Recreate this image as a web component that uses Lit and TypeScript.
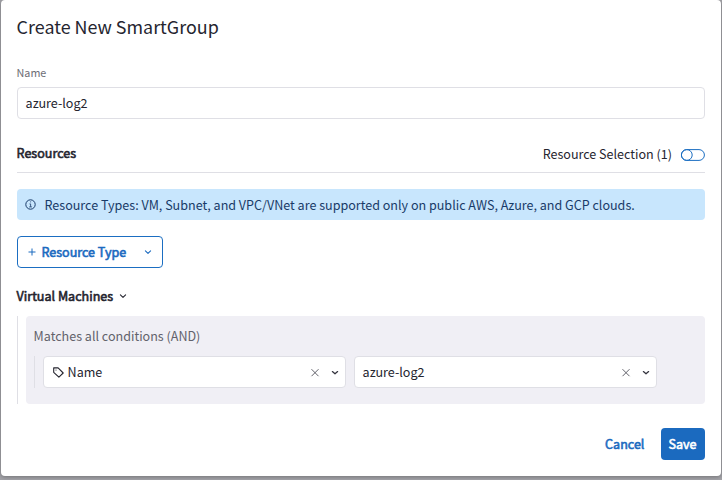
import { LitElement, html, css, svg } from "lit";
import { customElement, property } from "lit/decorators.js";

const chevron = (w: number) => html`<svg width=${w} height=${w} viewBox="0 0 8 8" fill="none" stroke="currentColor"
  stroke-width="1.1" stroke-linecap="round" stroke-linejoin="round">${svg`<path d="M1.4 2.9 4 5.4 6.6 2.9"/>`}</svg>`;

@customElement("select-field")
class SelectField extends LitElement {
  @property() value = "";
  static styles = css`
    :host { display: flex; align-items: center; box-sizing: border-box; width: 303px; height: 32px;
      padding: 0 6px 0 8px; background: #fff; border: 1px solid #dfdfe5; border-radius: 4px; color: #25252f; }
    .value { flex: 1; margin-left: -.4px; }
    svg { display: block; }
    .clear { margin-right: 11px; color: #62626b; }
    .arrow { color: #33333d; }
  `;
  render() {
    return html`<slot></slot><span class="value">${this.value}</span>
      <svg class="clear" width="10" height="10" viewBox="0 0 10 10" fill="none" stroke="currentColor"><path d="M1.5 2.2 8.5 9.2M8.5 2.2 1.5 9.2"/></svg>
      <svg class="arrow" width="8" height="8" viewBox="0 0 8 8" fill="none" stroke="currentColor" stroke-width="1.3" stroke-linecap="round" stroke-linejoin="round"><path d="M1.4 3.6 4 5.8 6.6 3.6"/></svg>`;
  }
}

@customElement("app-root")
class AppRoot extends LitElement {
  static styles = css`
    :host { display: block; box-sizing: border-box; width: 722px; height: 480px; padding: 0 1px 4px; overflow: hidden;
      background: #a3a3a8; font: 12.55px/20px "Noto Sans CJK SC", "Noto Sans", sans-serif; color: #25252f; }
    svg { display: block; flex: none; }
    .dialog { box-sizing: border-box; height: 476px; padding: 11px 16px 0 15.6px; background: #fff; border-radius: 4px;
      box-shadow: 0 1px 4px #0000004d; display: flex; flex-direction: column; }
    .title { font-size: 17.9px; line-height: 30px; }
    .label { margin-top: 22px; font-size: 10.75px; color: #6d6d76; }
    .input { margin: 4px 0 0 .4px; height: 30px; line-height: 30px; border: 1px solid #dfdfe5; border-radius: 4px; padding-left: 7.6px; }
    .resources { margin: 24px 0 0 .4px; height: 29px; border-bottom: 1px solid #dfdfe5; display: flex; justify-content: space-between; }
    .bold { -webkit-text-stroke: .6px currentColor; }
    .resources .bold { margin-left: -.4px; }
    .selection { display: flex; align-items: flex-start; height: 23px; gap: 8px; }
    .selection span { line-height: 22px; }
    .selection svg { margin-top: 6px; }
    .info { margin: 16px 0 0 .4px; height: 31px; border-radius: 4px; background: #c8e6fd; color: #193b68; display: flex;
      align-items: center; padding-left: 8.5px; gap: 8px; }
    .add { margin: 16px 0 0 .4px; box-sizing: border-box; width: 146px; height: 32px; border: 1px solid #1b6ec2; border-radius: 4px;
      display: flex; align-items: center; padding: 0 10px; color: #1b6abf; }
    .add .text { margin-left: 5.4px; flex: 1; }
    .machines { margin-top: 18px; height: 20px; display: flex; align-items: center; gap: 6px; }
    .group { margin: 10px 0 0 .4px; height: 88px; border-left: 1px solid #dfdfe5; padding-left: 8px; }
    .panel { box-sizing: border-box; height: 88px; background: #f0eff5; border-radius: 4px; padding: 10px 8px; }
    .match { color: #62626b; margin-left: -.4px; }
    .row { margin-top: 10px; border-left: 1px solid #dfdfe5; padding-left: 8px; display: flex; gap: 8px; }
    .tag { margin: 0 4px 0 1px; }
    .footer { margin-top: 24px; height: 32px; display: flex; justify-content: flex-end; align-items: center; gap: 16.6px;
      color: #1b6abf; }
    .save { box-sizing: border-box; width: 44px; height: 32px; line-height: 32px; padding-right: 1px; text-align: center; background: #1b6abf; color: #fff; border-radius: 4px; }
  `;
  render() {
    return html`<div class="dialog">
      <div class="title"><span>Create New SmartGroup</span></div>
      <div class="label"><span>Name</span></div>
      <div class="input"><span>azure-log2</span></div>
      <div class="resources">
        <span class="bold">Resources</span>
        <div class="selection"><span>Resource Selection (1)</span>
          <svg width="25" height="12" viewBox="0 0 25 12" fill="none" stroke="#1b6ec2"><rect x="1.4" y=".6" width="23" height="10.8" rx="5.4"/><circle cx="6.8" cy="6" r="5.4"/></svg>
        </div>
      </div>
      <div class="info">
        <svg width="11" height="11" viewBox="0 0 11 11" fill="none" stroke="currentColor"><circle cx="5.5" cy="5.5" r="4.7"/><path d="M4.5 4.9h1.1v2.9M4.2 7.9h2.7M5.1 2.9h1" stroke-width=".8"/></svg>
        <span>Resource Types: VM, Subnet, and VPC/VNet are supported only on public AWS, Azure, and GCP clouds.</span>
      </div>
      <div class="add">
        <svg width="8" height="8" viewBox="0 0 8 8" stroke="currentColor"><path d="M4 .5v7M.5 4h7"/></svg>
        <span class="text bold">Resource Type</span>${chevron(8)}
      </div>
      <div class="machines"><span class="bold">Virtual Machines</span>${chevron(8)}</div>
      <div class="group"><div class="panel">
        <div class="match"><span>Matches all conditions (AND)</span></div>
        <div class="row">
          <select-field value="Name"><svg class="tag" width="11" height="11" viewBox="0 0 11 11" fill="none" stroke="currentColor" stroke-width="1.1" stroke-linejoin="round"><path d="M.7.9h4.4l5.1 5.1-4.3 4.2L.7 5.3Z"/><circle cx="3" cy="3" r=".6" fill="currentColor" stroke="none"/></svg></select-field>
          <select-field value="azure-log2"></select-field>
        </div>
      </div></div>
      <div class="footer"><span class="bold">Cancel</span><div class="save bold">Save</div></div>
    </div>`;
  }
}
